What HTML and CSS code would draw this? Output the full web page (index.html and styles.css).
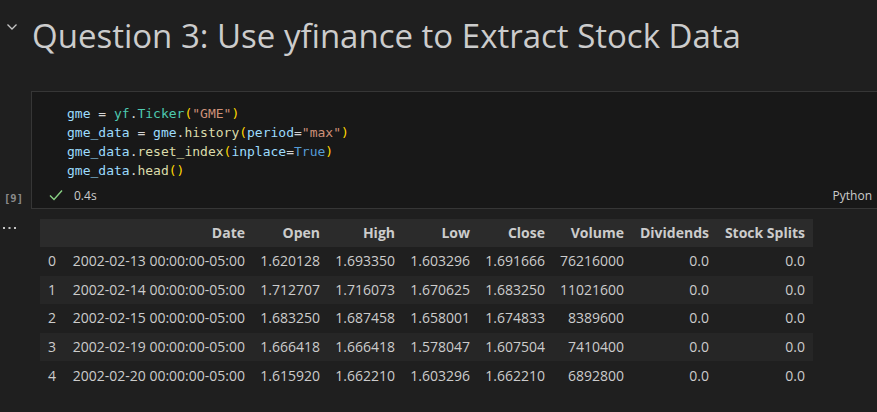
FILE: index.html
```html
<!DOCTYPE html>
<html>
<head>
<meta charset="utf-8">
<link rel="stylesheet" href="styles.css">
</head>
<body>
<div class="md-cell">
  <div class="chev">
    <svg width="12" height="8" viewBox="0 0 12 8"><polyline points="1.5,1.5 6,6 10.5,1.5" fill="none" stroke="#c5c5c5" stroke-width="1.3"/></svg>
  </div>
  <h1 class="title">Question 3: Use yfinance to Extract Stock Data</h1>
</div>

<div class="code-row">
  <div class="gutter"><span class="count">[9]</span></div>
  <div class="code-cell">
    <pre class="code"><span class="v">gme</span> <span class="o">=</span> <span class="m">yf</span><span class="o">.</span><span class="m">Ticker</span><span class="b">(</span><span class="s">"GME"</span><span class="b">)</span>
<span class="v">gme_data</span> <span class="o">=</span> <span class="v">gme</span><span class="o">.</span><span class="f">history</span><span class="b">(</span><span class="v">period</span><span class="o">=</span><span class="s">"max"</span><span class="b">)</span>
<span class="v">gme_data</span><span class="o">.</span><span class="f">reset_index</span><span class="b">(</span><span class="v">inplace</span><span class="o">=</span><span class="k">True</span><span class="b">)</span>
<span class="v">gme_data</span><span class="o">.</span><span class="f">head</span><span class="b">()</span></pre>
    <div class="status">
      <svg class="check" width="14" height="12" viewBox="0 0 14 12"><polyline points="1,6.5 5,10.5 13,1.5" fill="none" stroke="#89d185" stroke-width="1.4"/></svg>
      <span class="time">0.4s</span>
      <span class="lang">Python</span>
    </div>
  </div>
</div>

<div class="out-row">
  <div class="out-gutter">
    <svg class="dots" width="16" height="4" viewBox="0 0 16 4"><rect x="0" y="1" width="2" height="2" fill="#c5c5c5"/><rect x="5.5" y="1" width="2" height="2" fill="#c5c5c5"/><rect x="11" y="1" width="2" height="2" fill="#c5c5c5"/></svg>
  </div>
  <table class="df">
    <thead>
      <tr><th class="c-idx"></th><th class="c-date">Date</th><th class="c-n">Open</th><th class="c-n">High</th><th class="c-n">Low</th><th class="c-n">Close</th><th class="c-vol">Volume</th><th class="c-div">Dividends</th><th class="c-ss">Stock Splits</th></tr>
    </thead>
    <tbody>
      <tr><td class="c-idx">0</td><td>2002-02-13 00:00:00-05:00</td><td>1.620128</td><td>1.693350</td><td>1.603296</td><td>1.691666</td><td>76216000</td><td>0.0</td><td>0.0</td></tr>
      <tr><td class="c-idx">1</td><td>2002-02-14 00:00:00-05:00</td><td>1.712707</td><td>1.716073</td><td>1.670625</td><td>1.683250</td><td>11021600</td><td>0.0</td><td>0.0</td></tr>
      <tr><td class="c-idx">2</td><td>2002-02-15 00:00:00-05:00</td><td>1.683250</td><td>1.687458</td><td>1.658001</td><td>1.674833</td><td>8389600</td><td>0.0</td><td>0.0</td></tr>
      <tr><td class="c-idx">3</td><td>2002-02-19 00:00:00-05:00</td><td>1.666418</td><td>1.666418</td><td>1.578047</td><td>1.607504</td><td>7410400</td><td>0.0</td><td>0.0</td></tr>
      <tr><td class="c-idx">4</td><td>2002-02-20 00:00:00-05:00</td><td>1.615920</td><td>1.662210</td><td>1.603296</td><td>1.662210</td><td>6892800</td><td>0.0</td><td>0.0</td></tr>
    </tbody>
  </table>
</div>
</body>
</html>
```

FILE: styles.css
```css
html, body {
  margin: 0;
  padding: 0;
  background: #1f1f1f;
  color: #cccccc;
  font-family: "Open Sans", "Noto Sans", sans-serif;
  overflow: hidden;
}

.md-cell {
  display: flex;
  align-items: flex-start;
  padding-top: 13px;
  height: 78px;
  box-sizing: border-box;
}

.chev {
  width: 32px;
  padding-left: 6px;
  padding-top: 10px;
  box-sizing: border-box;
}

.chev svg { display: block; }

.title {
  margin: 0;
  font-weight: 400;
  font-size: 33px;
  line-height: 46px;
  color: #cccccc;
  white-space: nowrap;
}

.code-row {
  display: flex;
  margin-top: 13px;
}

.gutter {
  width: 31px;
  display: flex;
  align-items: flex-end;
  justify-content: flex-start;
  padding-bottom: 4px;
  padding-left: 4px;
  box-sizing: border-box;
}

.count {
  font-family: "DejaVu Sans Mono", monospace;
  font-size: 10.5px;
  font-weight: 700;
  color: #8b8b8b;
  line-height: 14px;
}

.code-cell {
  flex: 1;
  background: #181818;
  border-top: 1px solid #363636;
  border-bottom: 1px solid #363636;
  border-left: 1px solid #363636;
  height: 118px;
  box-sizing: border-box;
  display: flex;
  flex-direction: column;
}

.code {
  margin: 0;
  padding: 12px 0 0 35px;
  font-family: "DejaVu Sans Mono", monospace;
  font-size: 13px;
  line-height: 19px;
  color: #d4d4d4;
}

.v { color: #9cdcfe; }
.o { color: #d4d4d4; }
.m { color: #4ec9b0; }
.f { color: #dcdcaa; }
.s { color: #ce9178; }
.b { color: #ffd700; }
.k { color: #569cd6; }

.status {
  display: flex;
  align-items: center;
  height: 22px;
  margin-top: 4px;
  font-size: 12px;
}

.check {
  margin-left: 17px;
  display: block;
}

.time {
  margin-left: 11px;
  color: #cccccc;
}

.lang {
  margin-left: auto;
  margin-right: 5px;
  color: #cccccc;
}

.out-row {
  display: flex;
  margin-top: 10px;
}

.out-gutter {
  width: 40px;
  padding-left: 3px;
  padding-top: 7px;
  box-sizing: border-box;
}

.dots { display: block; }

.df {
  border-collapse: collapse;
  table-layout: fixed;
  width: 773px;
  font-size: 14px;
  color: #cccccc;
}

.df th, .df td {
  text-align: right;
  padding: 0 8px 0 0;
  white-space: nowrap;
  line-height: 20px;
}

.df thead tr {
  background: #2b2b2b;
  height: 28px;
}

.df th { font-weight: 700; }

.df tbody tr { height: 28.6px; }

.df tbody tr:nth-child(even) { background: #262626; }

.df .c-idx { text-align: left; padding-left: 8px; width: 9px; }
.c-date { width: 180px; }
.c-n { width: 67px; }
.c-vol { width: 71px; }
.c-div { width: 77px; }
.c-ss { width: 88px; }
```
